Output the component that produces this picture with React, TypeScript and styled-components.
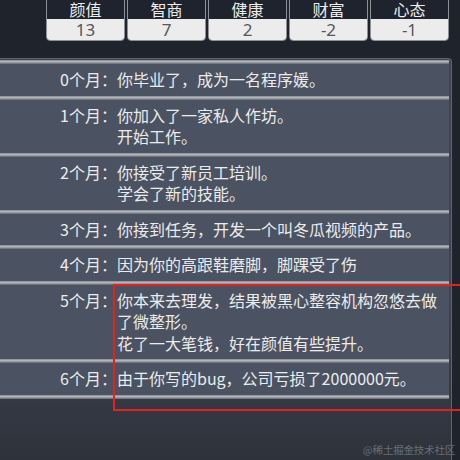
import React from "react";
import styled, { createGlobalStyle } from "styled-components";

const Global = createGlobalStyle`
  html, body { margin: 0; padding: 0; background: #1f232c; }
  body { font-family: "Noto Sans CJK SC", "Noto Sans", sans-serif; }
`;

const Page = styled.div`
  position: relative;
  width: 460px;
  height: 460px;
  overflow: hidden;
  background: #1f232c;
  display: flex;
  flex-direction: column;
`;

const Stats = styled.div`
  display: grid;
  grid-template-columns: repeat(5, 79px);
  gap: 2px;
  margin: -1px 0 0 46px;
`;

const Stat = styled.div`
  display: flex;
  flex-direction: column;
  border: 1px solid #8c9097;
  border-radius: 0 0 4px 4px;
  overflow: hidden;
`;

const StatLabel = styled.div`
  height: 19px;
  line-height: 19px;
  text-align: center;
  background: #1f232d;
  color: #eeeeee;
  font-size: 16px;
  overflow: hidden;
`;

const StatValue = styled.div`
  height: 21px;
  line-height: 21px;
  text-align: center;
  background: #ececec;
  color: #52575e;
  font-family: "Noto Sans", "Open Sans", sans-serif;
  font-size: 17px;
  overflow: hidden;
`;

const Panel = styled.div`
  margin-top: 17px;
  width: 449px;
  flex: 1;
  border: 1px solid #5f646d;
  border-left: none;
  border-bottom: none;
  border-radius: 0 4px 0 0;
  padding: 1px 2px 0 0;
  background: linear-gradient(to bottom, #3f4450 60%, #2e323b 100%);
  display: flex;
  flex-direction: column;
`;

const Sep = styled.div`
  height: 4px;
  background: linear-gradient(
    to bottom,
    #80858d 0%,
    #b4b7bc 35%,
    #90949b 70%,
    #5c616b 100%
  );
`;

const Row = styled.div`
  display: grid;
  grid-template-columns: 117px 1fr;
  padding: 5px 0;
  background: #4b5262;
  color: #ececec;
  font-size: 16px;
  line-height: 21.5px;
`;

const Month = styled.div`
  text-align: right;
  white-space: nowrap;
`;

const Lines = styled.div`
  display: flex;
  flex-direction: column;
`;

const Highlight = styled.div`
  position: absolute;
  left: 113px;
  top: 284px;
  width: 360px;
  height: 123px;
  border: 2px solid #e3221e;
`;

const Watermark = styled.div`
  position: absolute;
  right: 5px;
  bottom: 3px;
  font-size: 10.5px;
  line-height: 14px;
  color: #6a6e76;
  letter-spacing: -0.2px;
`;

const stats = [
  ["颜值", "13"],
  ["智商", "7"],
  ["健康", "2"],
  ["财富", "-2"],
  ["心态", "-1"],
];

const events: string[][] = [
  ["你毕业了，成为一名程序媛。"],
  ["你加入了一家私人作坊。", "开始工作。"],
  ["你接受了新员工培训。", "学会了新的技能。"],
  ["你接到任务，开发一个叫冬瓜视频的产品。"],
  ["因为你的高跟鞋磨脚，脚踝受了伤"],
  ["你本来去理发，结果被黑心整容机构忽悠去做了微整形。", "花了一大笔钱，好在颜值有些提升。"],
  ["由于你写的bug，公司亏损了2000000元。"],
];

export default function App() {
  return (
    <Page>
      <Global />
      <Stats>
        {stats.map(([label, value]) => (
          <Stat key={label}>
            <StatLabel>{label}</StatLabel>
            <StatValue>{value}</StatValue>
          </Stat>
        ))}
      </Stats>
      <Panel>
        <Sep />
        {events.map((lines, i) => (
          <React.Fragment key={i}>
            <Row>
              <Month>{i}个月：</Month>
              <Lines>
                {lines.map((l, j) => (
                  <span key={j}>{l}</span>
                ))}
              </Lines>
            </Row>
            <Sep />
          </React.Fragment>
        ))}
      </Panel>
      <Highlight />
      <Watermark>@稀土掘金技术社区</Watermark>
    </Page>
  );
}
